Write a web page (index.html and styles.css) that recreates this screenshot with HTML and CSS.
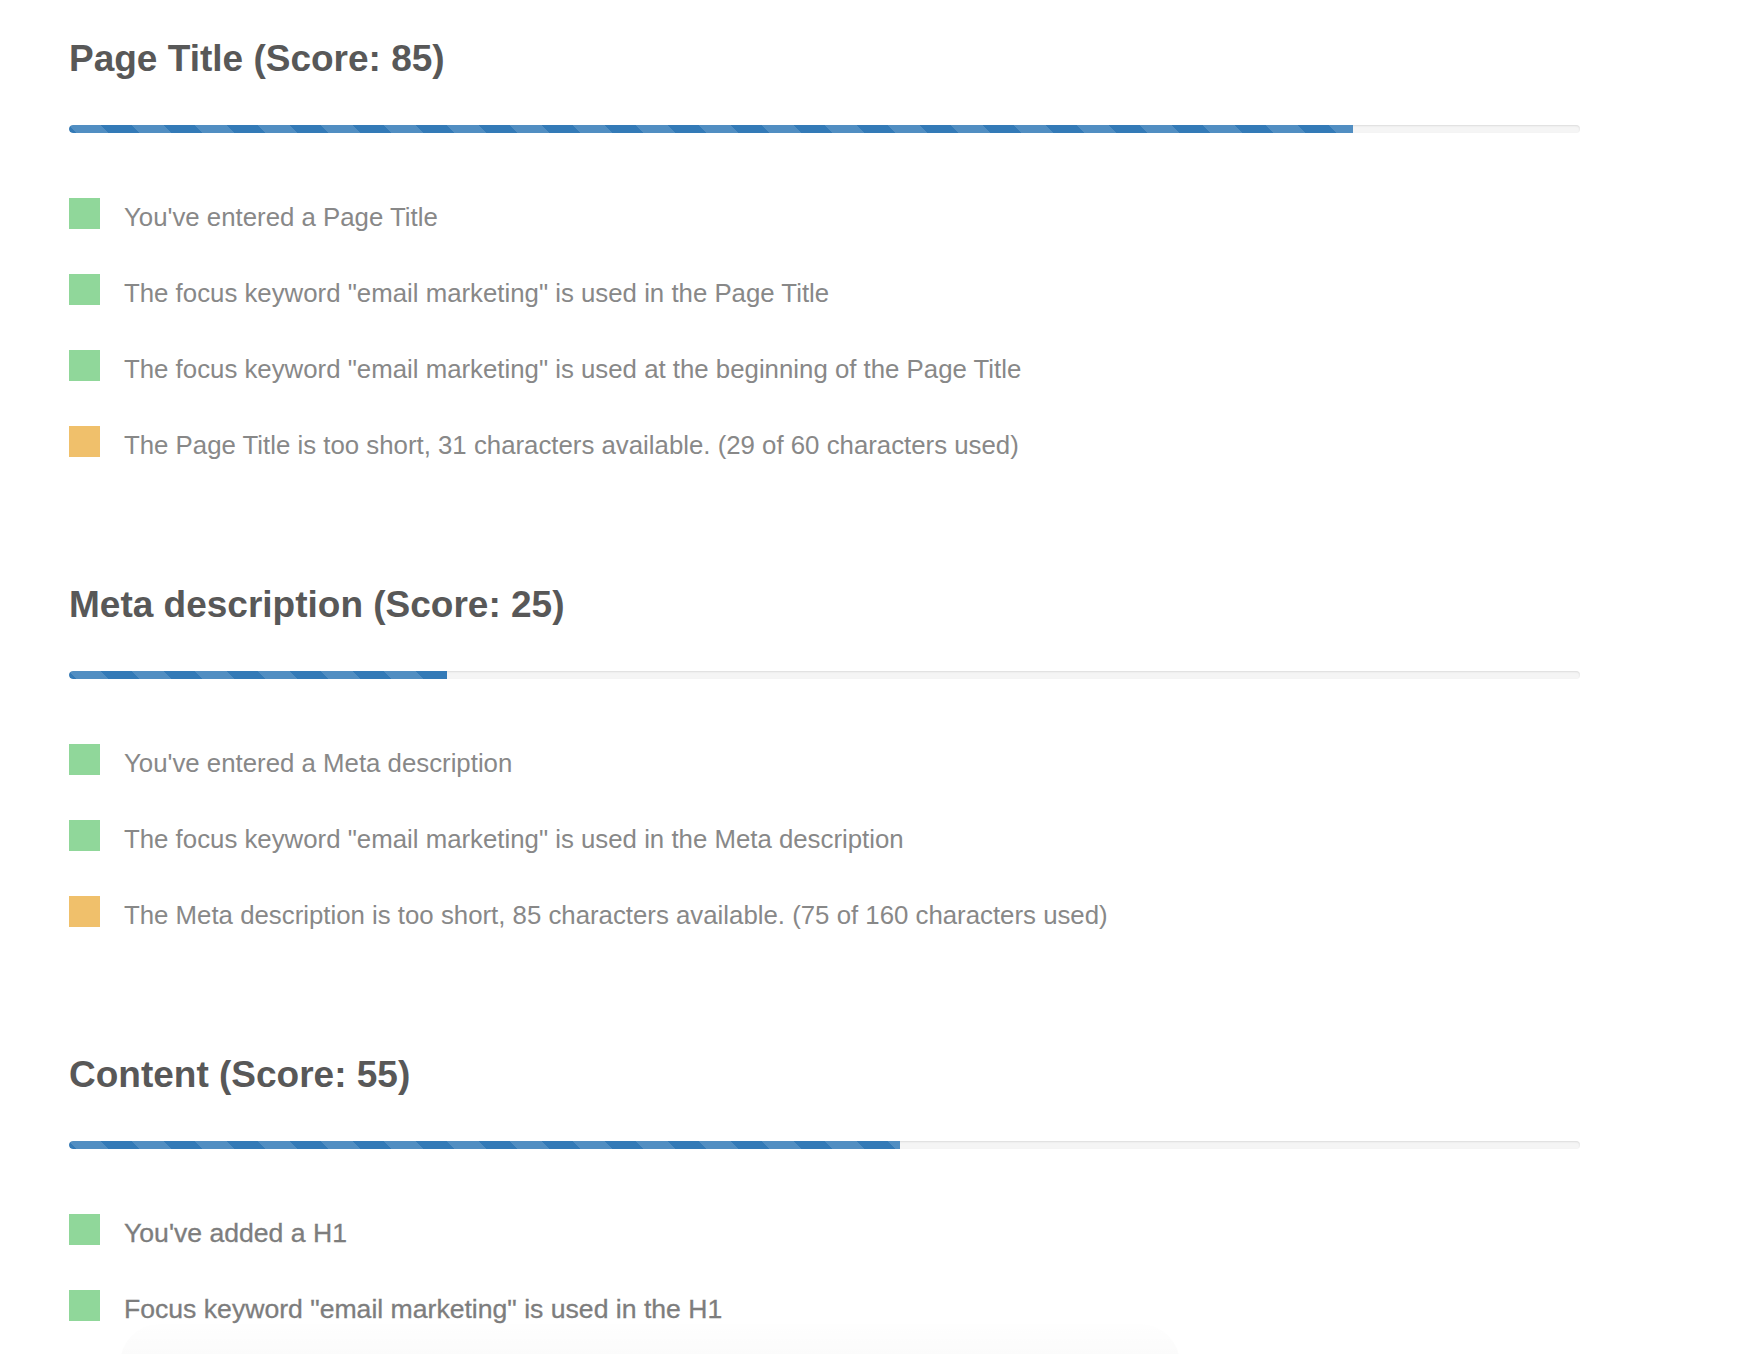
FILE: index.html
```html
<!DOCTYPE html>
<html lang="en">
<head>
    <meta charset="UTF-8">
    <meta name="viewport" content="width=device-width, initial-scale=1.0">
    <title>SEO Analysis</title>
    <link rel="stylesheet" href="styles.css">
</head>
<body>

<div class="report">

    <div class="section">
        <h2 class="section-title">Page Title (Score: 85)</h2>
        <div class="progress"><div class="progress-bar" style="width: 85%"></div></div>
        <ul class="checks">
            <li class="check good"><span class="mark"></span>You've entered a Page Title</li>
            <li class="check good"><span class="mark"></span>The focus keyword "email marketing" is used in the Page Title</li>
            <li class="check good"><span class="mark"></span>The focus keyword "email marketing" is used at the beginning of the Page Title</li>
            <li class="check warn"><span class="mark"></span>The Page Title is too short, 31 characters available. (29 of 60 characters used)</li>
        </ul>
    </div>

    <div class="section">
        <h2 class="section-title">Meta description (Score: 25)</h2>
        <div class="progress"><div class="progress-bar" style="width: 25%"></div></div>
        <ul class="checks">
            <li class="check good"><span class="mark"></span>You've entered a Meta description</li>
            <li class="check good"><span class="mark"></span>The focus keyword "email marketing" is used in the Meta description</li>
            <li class="check warn"><span class="mark"></span>The Meta description is too short, 85 characters available. (75 of 160 characters used)</li>
        </ul>
    </div>

    <div class="section">
        <h2 class="section-title">Content (Score: 55)</h2>
        <div class="progress"><div class="progress-bar" style="width: 55%"></div></div>
        <ul class="checks faded">
            <li class="check good"><span class="mark"></span>You've added a H1</li>
            <li class="check good"><span class="mark"></span>Focus keyword "email marketing" is used in the H1</li>
        </ul>
    </div>

</div>

<div class="fade"></div>

</body>
</html>
```

FILE: styles.css
```css
body {
    font-family: "Liberation Sans", Arial, sans-serif;
    margin: 0;
    background-color: #fff;
    overflow: hidden;
}

.report {
    width: 1511px;
    padding: 37px 0 0 69px;
    display: flex;
    flex-direction: column;
    gap: 118px;
}

.section-title {
    margin: 0 0 44px;
    font-size: 37px;
    line-height: 44px;
    font-weight: bold;
    color: #585858;
}

.progress {
    height: 8px;
    background-color: #f5f5f5;
    border-radius: 4px;
    box-shadow: inset 0 1px 2px rgba(0, 0, 0, 0.1);
    overflow: hidden;
}

.progress-bar {
    height: 100%;
    border-radius: 4px 0 0 4px;
    background-color: #337ab7;
    background-image: linear-gradient(45deg, rgba(255, 255, 255, 0.15) 25%, transparent 25%, transparent 50%, rgba(255, 255, 255, 0.15) 50%, rgba(255, 255, 255, 0.15) 75%, transparent 75%, transparent);
    background-size: 63px 63px;
}

.checks {
    list-style: none;
    margin: 65px 0 0;
    padding: 0;
    display: flex;
    flex-direction: column;
    gap: 37px;
}

.check {
    display: flex;
    align-items: flex-start;
    font-size: 25.8px;
    line-height: 39px;
    color: #888;
}

.mark {
    flex: none;
    width: 31px;
    height: 31px;
    margin-right: 24px;
}

.good .mark {
    background-color: #90d79a;
}

.warn .mark {
    background-color: #f0c06b;
}

.faded .check {
    font-size: 26.6px;
    color: #7d7d7d;
    -webkit-text-stroke: 0.3px #7d7d7d;
}

.fade {
    position: absolute;
    left: 120px;
    top: 1324px;
    width: 1060px;
    height: 40px;
    border-radius: 40px 40px 0 0;
    background: linear-gradient(rgba(0, 0, 0, 0.003), rgba(0, 0, 0, 0.018));
}
```
